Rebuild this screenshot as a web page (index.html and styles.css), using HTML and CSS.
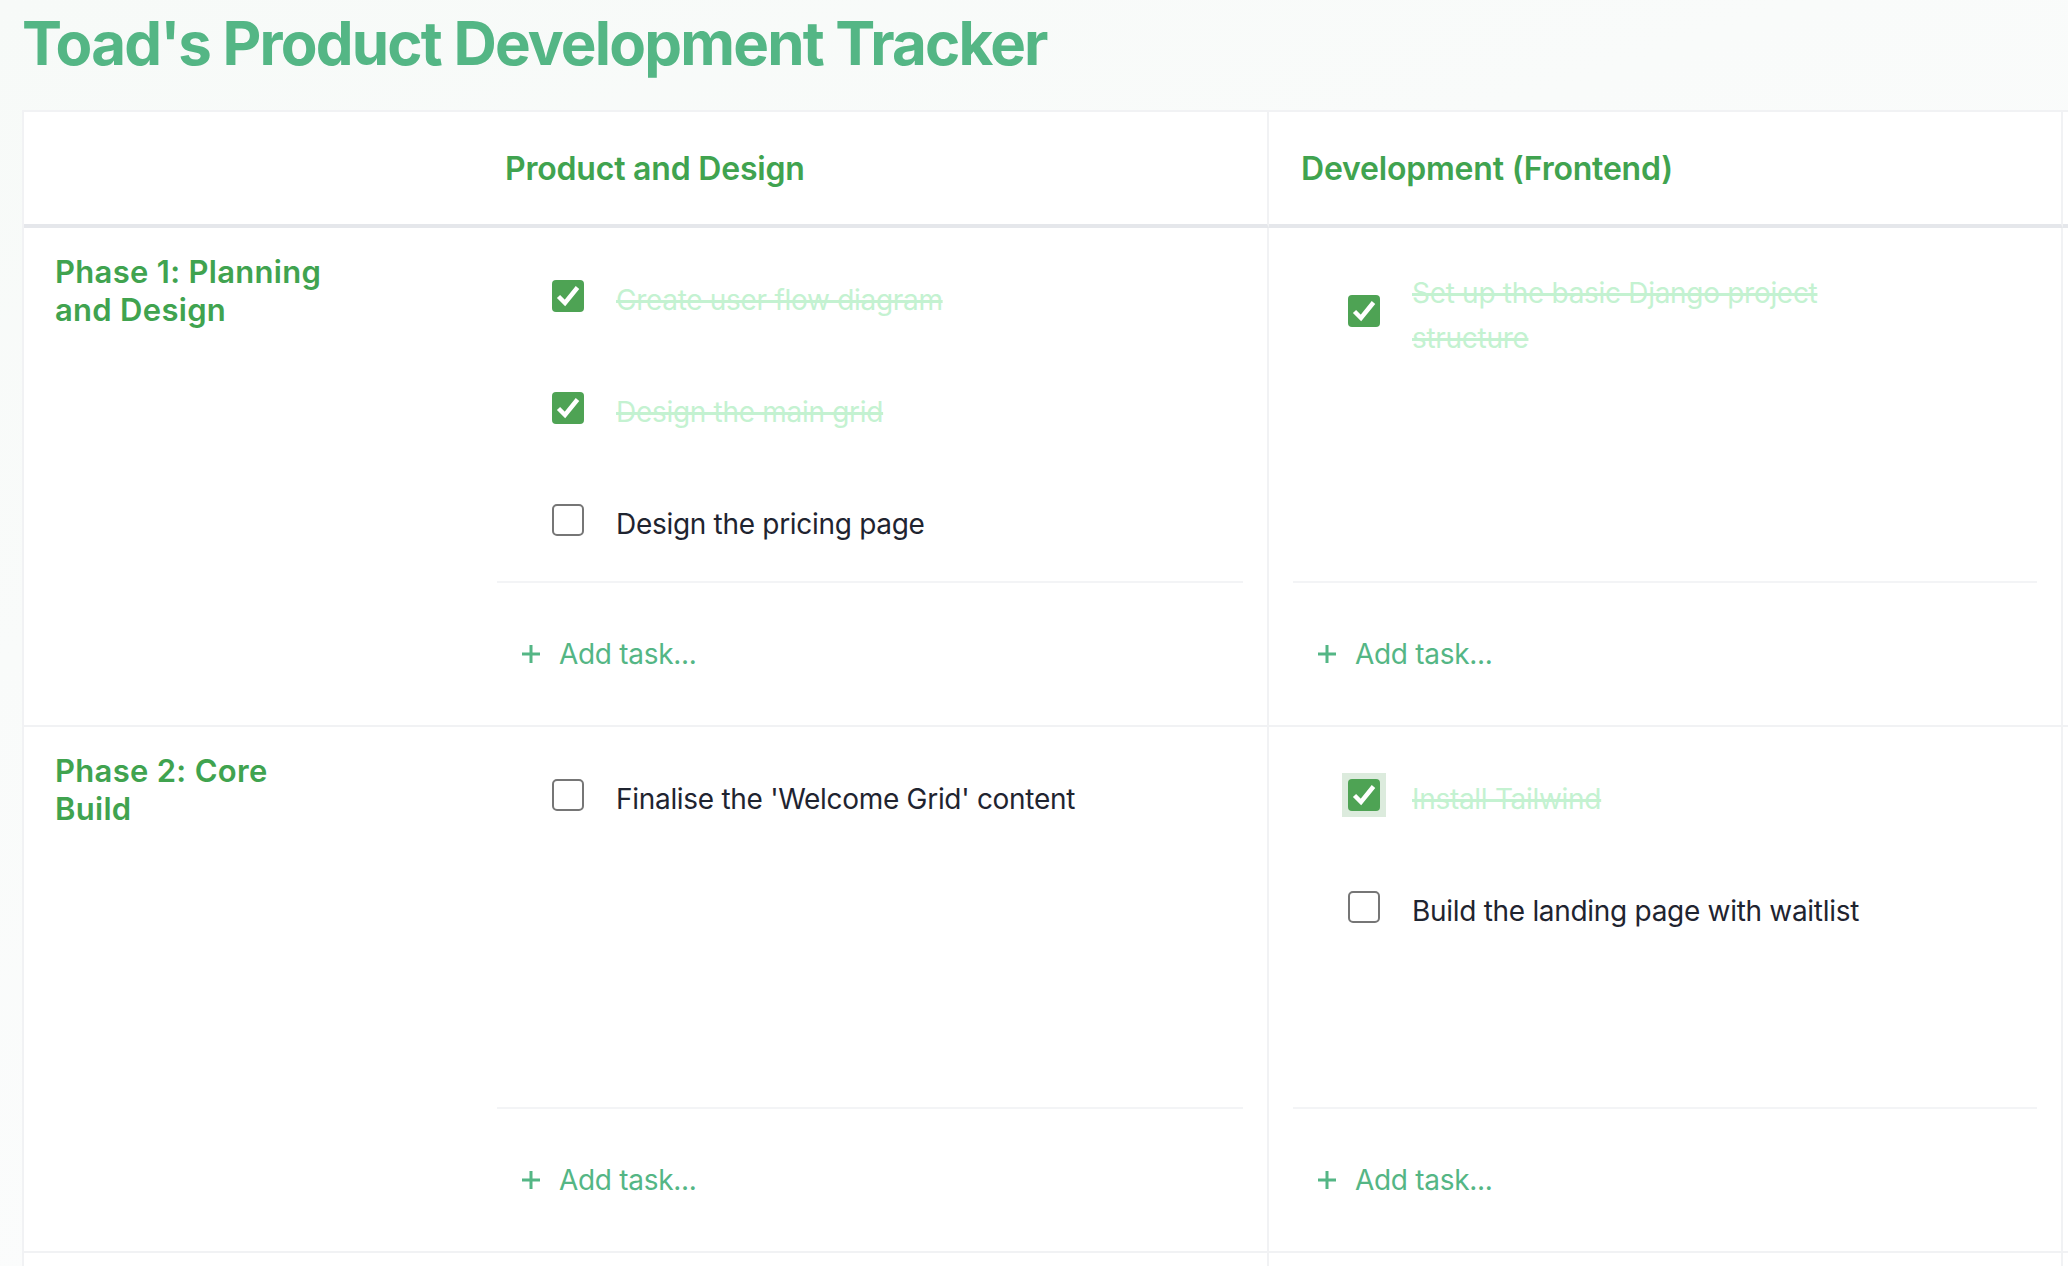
FILE: index.html
```html
<!DOCTYPE html>
<html lang="en">
<head>
<meta charset="utf-8">
<title>Toad's Product Development Tracker</title>
<link rel="stylesheet" href="styles.css">
</head>
<body>
<div class="page">
  <h1 class="title">Toad's Product Development Tracker</h1>
  <div class="board">
    <div class="hcell"></div>
    <div class="hcell hcell-team">Product and Design</div>
    <div class="hcell hcell-team">Development (Frontend)</div>
    <div class="hcell hcell-team"></div>

    <div class="phase"><div class="phase-text">Phase 1: Planning and Design</div></div>
    <div class="cell">
      <ul class="tasks">
        <li class="task done"><span class="box checked"><svg viewBox="0 0 32 32"><path d="M6.5 16.5 L13 23 L25.5 7.5"/></svg></span><span class="label">Create user flow diagram</span></li>
        <li class="task done"><span class="box checked"><svg viewBox="0 0 32 32"><path d="M6.5 16.5 L13 23 L25.5 7.5"/></svg></span><span class="label">Design the main grid</span></li>
        <li class="task"><span class="box"></span><span class="label">Design the pricing page</span></li>
      </ul>
      <div class="add"><svg viewBox="0 0 20 20"><path d="M10 1 V19 M1 10 H19"/></svg><span>Add task...</span></div>
    </div>
    <div class="cell">
      <ul class="tasks">
        <li class="task done"><span class="box checked"><svg viewBox="0 0 32 32"><path d="M6.5 16.5 L13 23 L25.5 7.5"/></svg></span><span class="label">Set up the basic Django project structure</span></li>
      </ul>
      <div class="add"><svg viewBox="0 0 20 20"><path d="M10 1 V19 M1 10 H19"/></svg><span>Add task...</span></div>
    </div>
    <div class="cell">
      <ul class="tasks"></ul>
      <div class="add"></div>
    </div>

    <div class="phase"><div class="phase-text">Phase 2: Core Build</div></div>
    <div class="cell">
      <ul class="tasks tasks-tall">
        <li class="task"><span class="box"></span><span class="label">Finalise the 'Welcome Grid' content</span></li>
      </ul>
      <div class="add"><svg viewBox="0 0 20 20"><path d="M10 1 V19 M1 10 H19"/></svg><span>Add task...</span></div>
    </div>
    <div class="cell">
      <ul class="tasks tasks-tall">
        <li class="task done"><span class="halo"><span class="box checked"><svg viewBox="0 0 32 32"><path d="M6.5 16.5 L13 23 L25.5 7.5"/></svg></span></span><span class="label">Install Tailwind</span></li>
        <li class="task"><span class="box"></span><span class="label">Build the landing page with waitlist</span></li>
      </ul>
      <div class="add"><svg viewBox="0 0 20 20"><path d="M10 1 V19 M1 10 H19"/></svg><span>Add task...</span></div>
    </div>
    <div class="cell">
      <ul class="tasks tasks-tall"></ul>
      <div class="add"></div>
    </div>

    <div class="phase phase-filler"></div>
    <div class="cell cell-filler"></div>
    <div class="cell cell-filler"></div>
    <div class="cell cell-filler"></div>
  </div>
</div>
</body>
</html>
```

FILE: styles.css
```css
* { box-sizing: border-box; }

html, body {
  margin: 0;
  overflow: hidden;
}

body {
  background: linear-gradient(160deg, #f7faf8 0%, #fbfcfc 60%, #f9fbfa 100%);
  font-family: Inter, "Noto Sans", sans-serif;
  min-height: 1266px;
}

.page {
  padding: 7px 0 0 22px;
}

.title {
  margin: 0 0 31px;
  font-size: 60px;
  line-height: 72px;
  font-weight: 700;
  color: #54b685;
  letter-spacing: -1.8px;
  white-space: nowrap;
}

.board {
  display: grid;
  grid-template-columns: 449px 796px 794px 794px;
  width: max-content;
  background: #fff;
  border-top: 2px solid #f1f2f4;
  border-left: 2px solid #f1f2f4;
}

.hcell {
  padding: 33px 32px 31px;
  min-height: 116px;
  font-size: 32px;
  line-height: 48px;
  font-weight: 600;
  color: #40a34f;
  letter-spacing: -0.2px;
  border-bottom: 4px solid #e5e7eb;
  white-space: nowrap;
}

.hcell-team {
  border-right: 2px solid #f1f2f4;
}

.phase {
  padding: 25px 31px 26px;
  font-size: 31px;
  line-height: 38px;
  font-weight: 600;
  letter-spacing: 0.3px;
  color: #40a34f;
  border-bottom: 2px solid #f1f2f4;
}

.phase-text {
  max-width: 282px;
}

.cell {
  display: flex;
  flex-direction: column;
  padding: 0 24px;
  border-right: 2px solid #f1f2f4;
  border-bottom: 2px solid #f1f2f4;
}

.cell-filler,
.phase-filler {
  height: 200px;
}

.tasks {
  flex: 1;
  list-style: none;
  margin: 0;
  padding: 41px 0 27px 55px;
  display: flex;
  flex-direction: column;
  gap: 51px;
  border-bottom: 2px solid #f3f4f6;
}

.tasks-tall {
  min-height: 382px;
}

.task {
  display: flex;
  align-items: center;
  min-height: 61px;
  font-size: 28px;
  line-height: 45px;
  letter-spacing: -0.3px;
  color: #1f2430;
}

.label {
  max-width: 500px;
  padding-top: 2px;
}

.box {
  flex: none;
  display: block;
  width: 32px;
  height: 32px;
  margin: 0 32px 8px 0;
  border: 2px solid #767676;
  border-radius: 5px;
  background: #fff;
}

.box.checked {
  border: none;
  border-radius: 4px;
  background: #4ea354;
}

.box svg {
  display: block;
  width: 32px;
  height: 32px;
  fill: none;
  stroke: #fff;
  stroke-width: 4.5;
}

.halo {
  flex: none;
  display: block;
  padding: 6px;
  margin: -6px 26px 2px -6px;
  background: #dcebdd;
}

.halo .box {
  margin: 0;
}

.done .label {
  color: #c4f2d1;
  text-decoration: line-through;
  text-decoration-thickness: 3px;
}

.add {
  flex: none;
  height: 142px;
  display: flex;
  align-items: center;
  padding-left: 24px;
  font-size: 28px;
  letter-spacing: -0.3px;
  color: #54b685;
}

.add svg {
  width: 20px;
  height: 20px;
  margin-right: 18px;
  fill: none;
  stroke: #54b685;
  stroke-width: 3;
}
```
